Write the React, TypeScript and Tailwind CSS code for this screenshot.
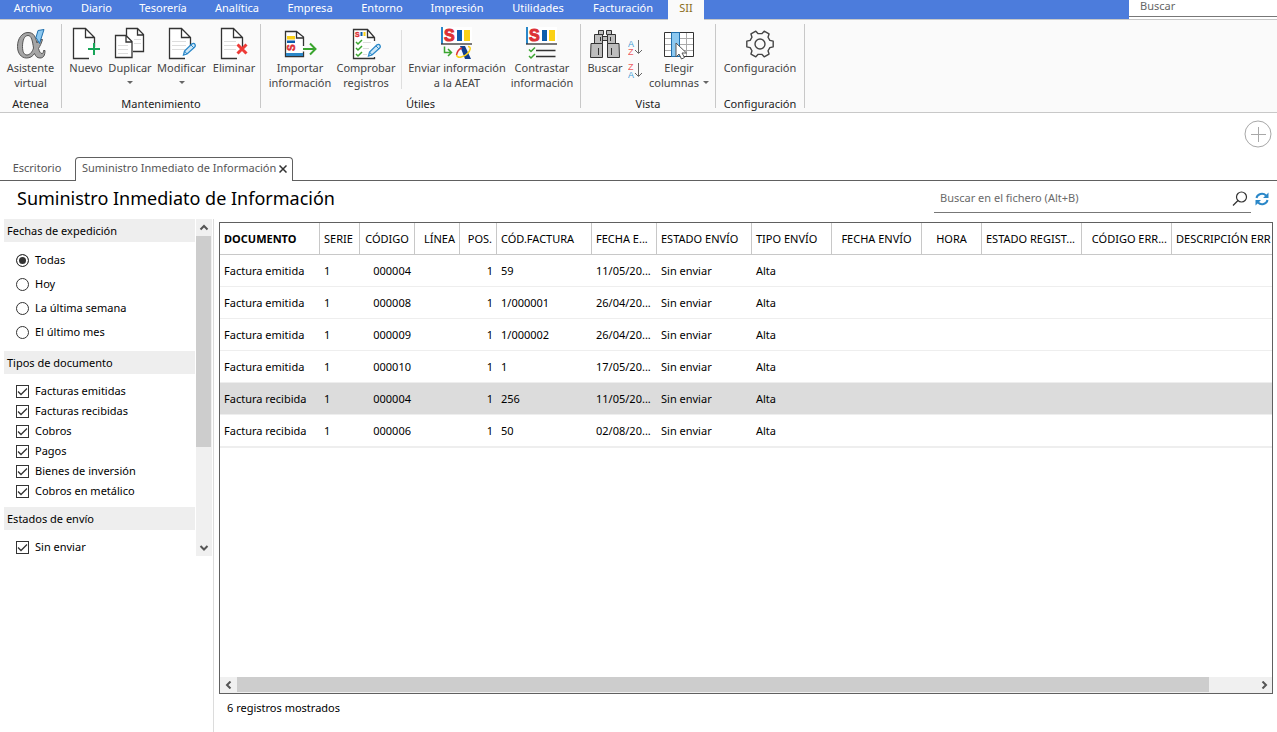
import type { ReactNode } from "react";

const MENU = [
  { label: "Archivo", width: "w-[66px]" },
  { label: "Diario", width: "w-[61px]" },
  { label: "Tesorería", width: "w-[72px]" },
  { label: "Analítica", width: "w-[76px]" },
  { label: "Empresa", width: "w-[70px]" },
  { label: "Entorno", width: "w-[74px]" },
  { label: "Impresión", width: "w-[76px]" },
  { label: "Utilidades", width: "w-[86px]" },
  { label: "Facturación", width: "w-[84px]" },
];

type Align = "left" | "center" | "right";

const COLUMNS: { label: string; width: string; head: Align; cell: Align }[] = [
  { label: "DOCUMENTO", width: "w-[100px]", head: "left", cell: "left" },
  { label: "SERIE", width: "w-[40px]", head: "left", cell: "left" },
  { label: "CÓDIGO", width: "w-[55px]", head: "center", cell: "right" },
  { label: "LÍNEA", width: "w-[45px]", head: "right", cell: "right" },
  { label: "POS.", width: "w-[37px]", head: "right", cell: "right" },
  { label: "CÓD.FACTURA", width: "w-[95px]", head: "left", cell: "left" },
  { label: "FECHA E...", width: "w-[65px]", head: "left", cell: "left" },
  { label: "ESTADO ENVÍO", width: "w-[95px]", head: "left", cell: "left" },
  { label: "TIPO ENVÍO", width: "w-[80px]", head: "left", cell: "left" },
  { label: "FECHA ENVÍO", width: "w-[90px]", head: "center", cell: "left" },
  { label: "HORA", width: "w-[60px]", head: "center", cell: "left" },
  { label: "ESTADO REGIST...", width: "w-[100px]", head: "left", cell: "left" },
  { label: "CÓDIGO ERR...", width: "w-[90px]", head: "right", cell: "right" },
  { label: "DESCRIPCIÓN ERR", width: "w-auto", head: "left", cell: "left" },
];

const ROWS = [
  ["Factura emitida", "1", "000004", "", "1", "59", "11/05/20...", "Sin enviar", "Alta"],
  ["Factura emitida", "1", "000008", "", "1", "1/000001", "26/04/20...", "Sin enviar", "Alta"],
  ["Factura emitida", "1", "000009", "", "1", "1/000002", "26/04/20...", "Sin enviar", "Alta"],
  ["Factura emitida", "1", "000010", "", "1", "1", "17/05/20...", "Sin enviar", "Alta"],
  ["Factura recibida", "1", "000004", "", "1", "256", "11/05/20...", "Sin enviar", "Alta"],
  ["Factura recibida", "1", "000006", "", "1", "50", "02/08/20...", "Sin enviar", "Alta"],
];
const SELECTED_ROW = 4;

const ALIGN = { left: "text-left", center: "text-center", right: "text-right" };

export default function App() {
  return (
    <div className="flex h-screen flex-col overflow-hidden bg-white font-['Noto_Sans',sans-serif] text-[11px] text-black">
      <MenuBar />
      <Ribbon />
      <TabStrip />
      <TitleRow />
      <div className="flex min-h-0 flex-1">
        <Sidebar />
        <main className="flex min-w-0 flex-1 flex-col pt-[3px] pr-1 pl-[5px]">
          <Records />
          <p className="h-[38px] px-2 pt-[6px] leading-4">6 registros mostrados</p>
        </main>
      </div>
    </div>
  );
}

function MenuBar() {
  return (
    <nav className="flex h-[19px] shrink-0 bg-[#4c7cdc]">
      {MENU.map((m) => (
        <button key={m.label} className={`h-[19px] shrink-0 pb-[3px] text-center leading-4 text-white ${m.width}`}>
          {m.label}
        </button>
      ))}
      <button className="z-10 ml-[3px] h-5 w-9 bg-[#fafafa] pb-1 leading-4 text-[#8a6d1b]">SII</button>
      <div className="ml-auto w-[148px] bg-white">
        <input
          aria-label="Buscar"
          placeholder="Buscar"
          className="block h-[17px] w-full border-b border-[#777] px-[11px] pb-[6px] outline-none placeholder:text-[#666]"
        />
      </div>
    </nav>
  );
}

function Ribbon() {
  return (
    <div className="flex h-[94px] shrink-0 border-t border-b border-[#c8c8c8] bg-[#fafafa] pt-1 pb-1">
      <Group name="Atenea" width="w-[62px]">
        <Tool icon={<AlphaIcon />} lines={["Asistente", "virtual"]} width="w-[60px]" />
      </Group>
      <Group name="Mantenimiento" width="w-[199px]">
        <Tool icon={<NewIcon />} lines={["Nuevo"]} width="w-[43px]" />
        <Tool icon={<DuplicateIcon />} lines={["Duplicar"]} width="w-[45px]" menu />
        <Tool icon={<EditIcon />} lines={["Modificar"]} width="w-[58px]" menu />
        <Tool icon={<DeleteIcon />} lines={["Eliminar"]} width="w-[47px]" />
      </Group>
      <Group name="Útiles" width="w-[320px]">
        <Tool icon={<ImportIcon />} lines={["Importar", "información"]} width="w-[66px]" />
        <Tool icon={<CheckRecordsIcon />} lines={["Comprobar", "registros"]} width="w-[66px]" />
        <span className="mx-[2px] mt-[6px] h-[59px] w-px bg-[#dedede]" />
        <Tool icon={<SendIcon />} lines={["Enviar información", "a la AEAT"]} width="w-[106px]" />
        <Tool icon={<ContrastIcon />} lines={["Contrastar", "información"]} width="w-[64px]" />
      </Group>
      <Group name="Vista" width="w-[135px]">
        <Tool icon={<BinocularsIcon />} lines={["Buscar"]} width="w-[38px]" />
        <div className="mx-1 flex w-4 flex-col gap-[5px] pt-[14px]">
          <button aria-label="Orden ascendente">
            <SortIcon first="A" second="Z" />
          </button>
          <button aria-label="Orden descendente">
            <SortIcon first="Z" second="A" />
          </button>
        </div>
        <Tool icon={<ColumnsIcon />} lines={["Elegir", "columnas"]} width="w-[62px]" menu />
      </Group>
      <Group name="Configuración" width="w-[89px]">
        <Tool icon={<GearIcon />} lines={["Configuración"]} width="w-[80px]" />
      </Group>
    </div>
  );
}

function Group({ name, width, children }: { name: string; width: string; children: ReactNode }) {
  return (
    <section className={`flex shrink-0 flex-col border-r border-[#c8c8c8] ${width}`}>
      <div className="flex flex-1 justify-center">{children}</div>
      <h2 className="text-center leading-2 text-[#222]">{name}</h2>
    </section>
  );
}

function Tool({ icon, lines, width, menu }: { icon: ReactNode; lines: string[]; width: string; menu?: boolean }) {
  const arrow = (
    <svg width="6" height="3" className="inline-block">
      <path d="M0 0h6L3 3z" fill="#666" />
    </svg>
  );
  return (
    <button className={`flex shrink-0 flex-col items-center pt-[2px] whitespace-nowrap text-[#444] ${width}`}>
      {icon}
      <span className="leading-[15px]">{lines[0]}</span>
      {lines[1] ? (
        <span className="flex items-center gap-1 leading-[15px]">
          {lines[1]}
          {menu && arrow}
        </span>
      ) : (
        menu && <span className="flex h-[15px] items-center">{arrow}</span>
      )}
    </button>
  );
}

function TabStrip() {
  return (
    <div className="flex h-[68px] shrink-0 flex-col">
      <div className="flex flex-1 justify-end pt-[7px] pr-[5px]">
        <button aria-label="Nueva pestaña" className="h-7">
          <svg width="28" height="28" fill="none" stroke="#a8a8a8">
            <circle cx="14" cy="14" r="13" />
            <path d="M14.500 7v15M7 14.500h15" />
          </svg>
        </button>
      </div>
      <div className="flex text-[#555]">
        <button className="w-[75px] border-b border-[#606060] pr-px">Escritorio</button>
        <div className="flex h-6 w-[218px] items-center justify-between rounded-t-[4px] border border-b-0 border-[#606060] pr-[5px] pb-[2px] pl-[6px] whitespace-nowrap">
          <button>Suministro Inmediato de Información</button>
          <button aria-label="Cerrar">
            <svg width="8" height="8" stroke="#333" strokeWidth="1.500">
              <path d="M0.500 0.500l7 7M7.500 0.500l-7 7" />
            </svg>
          </button>
        </div>
        <span className="flex-1 border-b border-[#606060]" />
      </div>
    </div>
  );
}

function TitleRow() {
  return (
    <header className="flex h-[38px] shrink-0 justify-between pr-2 pl-[17px]">
      <h1 className="pt-[3px] text-[18px] leading-7">Suministro Inmediato de Información</h1>
      <div className="flex h-8 items-center gap-[4px]">
        <div className="flex h-8 w-[317px] items-center border-b border-[#777] pt-1 pr-[3px] pl-[6px]">
          <input
            aria-label="Buscar en el fichero"
            placeholder="Buscar en el fichero (Alt+B)"
            className="min-w-0 flex-1 outline-none placeholder:text-[#6a6a6a]"
          />
          <svg width="16" height="17" fill="none" stroke="#333" strokeWidth="1.200">
            <circle cx="9.500" cy="7" r="5" />
            <path d="M6 10.500L1 15.500" />
          </svg>
        </div>
        <button aria-label="Actualizar" className="pt-1">
          <svg width="14" height="14" fill="none" stroke="#2a87c8" strokeWidth="2">
            <path d="M1.500 6A5.500 5 0 0 1 11 3.500M12.500 8A5.500 5 0 0 1 3 10.500" />
            <path d="M13.500 0.500V6H8zM0.500 13.500V8H6z" fill="#2a87c8" stroke="none" />
          </svg>
        </button>
      </div>
    </header>
  );
}

function Sidebar() {
  return (
    <aside className="flex w-[214px] shrink-0 border-r border-[#dcdcdc] pl-1">
      <div className="w-[191px]">
        <PanelTitle>Fechas de expedición</PanelTitle>
        <div className="pt-[6px] pb-[7px]">
          {["Todas", "Hoy", "La última semana", "El último mes"].map((label, i) => (
            <label key={label} className="flex h-6 items-center gap-[6px] pl-3">
              <input
                type="radio"
                name="fecha"
                defaultChecked={i === 0}
                className="size-[13px] appearance-none rounded-full border border-[#333] bg-white checked:bg-[#333] checked:shadow-[inset_0_0_0_2px_white]"
              />
              {label}
            </label>
          ))}
        </div>
        <PanelTitle>Tipos de documento</PanelTitle>
        <div className="pt-[7px] pb-[6px]">
          <Check label="Facturas emitidas" />
          <Check label="Facturas recibidas" />
          <Check label="Cobros" />
          <Check label="Pagos" />
          <Check label="Bienes de inversión" />
          <Check label="Cobros en metálico" />
        </div>
        <PanelTitle>Estados de envío</PanelTitle>
        <div className="pt-[7px]">
          <Check label="Sin enviar" />
        </div>
      </div>
      <div className="ml-px flex h-[337px] w-4 flex-col bg-[#f0f0f0]">
        <ScrollArrow d="M1.500 5.500L5 2l3.500 3.500" className="h-[17px]" />
        <div className="h-[211px] w-[15px] bg-[#cdcdcd]" />
        <ScrollArrow d="M1.500 2L5 5.500 8.500 2" className="mt-auto h-[17px]" />
      </div>
    </aside>
  );
}

function PanelTitle({ children }: { children: ReactNode }) {
  return <h3 className="h-[23px] bg-[#eee] px-[3px] leading-[23px]">{children}</h3>;
}

function Check({ label }: { label: string }) {
  return (
    <label className="flex h-5 items-center gap-[6px] pl-3">
      <span className="grid">
        <input
          type="checkbox"
          defaultChecked
          className="peer col-start-1 row-start-1 size-[13px] appearance-none border border-[#333] bg-white"
        />
        <svg
          width="13"
          height="13"
          fill="none"
          stroke="#333"
          strokeWidth="1.300"
          className="pointer-events-none invisible col-start-1 row-start-1 peer-checked:visible"
        >
          <path d="M2 6.500L5 9.500L11 3.500" />
        </svg>
      </span>
      {label}
    </label>
  );
}

function ScrollArrow({ d, className }: { d: string; className: string }) {
  return (
    <button aria-label="Desplazar" className={`flex items-center justify-center ${className}`}>
      <svg width="10" height="8" fill="none" stroke="#555" strokeWidth="2">
        <path d={d} />
      </svg>
    </button>
  );
}

function Records() {
  return (
    <div className="flex min-h-0 flex-1 flex-col border border-[#606060]">
      <div className="flex-1 overflow-hidden">
        <table className="w-full table-fixed border-separate border-spacing-0 whitespace-nowrap">
          <thead>
            <tr className="h-8">
              {COLUMNS.map((c, i) => (
                <th
                  key={c.label}
                  className={`overflow-hidden border-b border-[#c8c8c8] px-1 pt-[2px] pb-px last:pr-0 not-last:border-r ${c.width} ${ALIGN[c.head]} ${i === 0 ? "font-bold" : "font-normal"}`}
                >
                  {c.label}
                </th>
              ))}
            </tr>
          </thead>
          <tbody>
            {ROWS.map((row, r) => (
              <tr key={r} className={r === SELECTED_ROW ? "h-8 bg-[#dcdcdc]" : "h-8 last:h-[33px] last:[&>td]:border-b-2"}>
                {COLUMNS.map((c, i) => (
                  <td key={c.label} className={`border-b border-[#eee] px-1 pt-[2px] pb-px ${ALIGN[c.cell]}`}>
                    {row[i]}
                  </td>
                ))}
              </tr>
            ))}
          </tbody>
        </table>
      </div>
      <div className="flex h-4 shrink-0 bg-[#f0f0f0]">
        <ScrollArrow d="M6.500 0.500L3 4l3.500 3.500" className="w-[17px]" />
        <div className="h-[15px] flex-1 bg-[#cdcdcd]" />
        <ScrollArrow d="M3.500 0.500L7 4 3.500 7.500" className="ml-[46px] w-[17px]" />
      </div>
    </div>
  );
}

function Icon({ children }: { children: ReactNode }) {
  return (
    <svg width="34" height="34" viewBox="0 0 34 34" fill="none" className="shrink-0">
      {children}
    </svg>
  );
}

function TextLines({ x, y, width }: { x: number; y: number; width: number }) {
  return <path d={`M${x} ${y}h${width}m-${width} 4h${width}m-${width} 4h${width}`} stroke="#ddd" />;
}

function Pencil({ x, y }: { x: number; y: number }) {
  return (
    <g transform={`translate(${x} ${y})`}>
      <path d="M0.500 12l1-4L9 0.800q2-1 3 0.500t-0.500 3L4 11z" fill="#cfe8f8" stroke="#2a87c8" strokeWidth="1.300" />
      <path d="M1.500 8L4 11M8 2l3 3" stroke="#2a87c8" />
    </g>
  );
}

function AlphaIcon() {
  const bowl = "M14 6.500C20 6.500 21.500 11 23 17L25 13.500H28.500C27.500 17 26 20 24.500 22.500C25.500 26 26.500 27.500 28 27.500C29 27.500 29.500 26.500 29.500 24.500H31C31 29.500 29.500 32 26 32C23 32 21.500 30 20.500 27.500C18.500 30.500 16 32 12.500 32C7 32 3.500 27 3.500 20.500C3.500 12.500 8 6.500 14 6.500z";
  return (
    <Icon>
      <path
        d={`${bowl}M14 9.500C10.500 9.500 8.500 14 8.500 20.500C8.500 26 10 29 13 29C16 29 18.500 25.500 19.500 22C18.500 15 17.500 9.500 14 9.500z`}
        fill="#a5a5a5"
        fillRule="evenodd"
        stroke="#555"
      />
      <path d="M24 4.500l6-1-4.500 14-3.500-6z" fill="#8cc8f0" stroke="#1f6fae" />
    </Icon>
  );
}

function Page() {
  return (
    <>
      <path d="M25.500 21V12L16.500 2.500H4.500V32.500H21M16.500 3v8.500H25" fill="#fff" />
      <path d="M25.500 21V11.500L16.500 2.500H4.500V32.500H20M16.500 3v8.500H25" stroke="#333" strokeWidth="1.300" />
    </>
  );
}

function NewIcon() {
  return (
    <Icon>
      <Page />
      <path d="M25 17v12M19 23h12" stroke="#18a558" strokeWidth="2" />
    </Icon>
  );
}

function DuplicateIcon() {
  return (
    <Icon>
      <path d="M13.500 10V2.500h11l6 6V25.500H20M24.500 3v6H30" fill="#fff" stroke="#333" strokeWidth="1.300" />
      <path d="M2.500 9.500h10.500l6 6V31.500H2.500zM13 10v6h6" fill="#fff" stroke="#333" strokeWidth="1.300" />
      <TextLines x={5} y={19.500} width={10} />
      <path d="M21 13.500h7m-7 4h7" stroke="#ddd" />
    </Icon>
  );
}

function EditIcon() {
  return (
    <Icon>
      <Page />
      <TextLines x={7} y={15.500} width={14} />
      <Pencil x={18} y={17} />
    </Icon>
  );
}

function DeleteIcon() {
  return (
    <Icon>
      <Page />
      <TextLines x={7} y={15.500} width={12} />
      <path d="M20.500 18.500l9 9M29.500 18.500l-9 9" stroke="#ee3b37" strokeWidth="3" />
    </Icon>
  );
}

function ImportIcon() {
  return (
    <Icon>
      <path d="M20.500 20V11L13.500 5.500H2.500v25h18v-5M13.500 6v6h7" fill="#fff" stroke="#333" strokeWidth="1.300" />
      <path d="M3 27h17v3H3z" fill="#2a87c8" />
      <path d="M4 10h8v3.500H4z" fill="#fbd116" />
      <path d="M4 14.500h8v2.500H4z" fill="#0b5cad" />
      <text transform="translate(12 25) rotate(-90)" fontSize="10" fontWeight="bold" fill="#dc3035" stroke="#dc3035" strokeWidth="0.500" className="font-['Liberation_Sans',sans-serif]">
        S
      </text>
      <path d="M20 23h12M27 17.500l5.500 5.500L27 28.500" stroke="#3aa52f" strokeWidth="2" />
    </Icon>
  );
}

function CheckRecordsIcon() {
  return (
    <Icon>
      <path d="M25.500 15V11.500L18.500 3.500H4.500V32.500H25.500V31M18.500 4v7.500h7" fill="#fff" stroke="#333" strokeWidth="1.300" />
      <text x="6" y="10.500" fontSize="7" fontWeight="bold" fill="#dc3035" stroke="#dc3035" strokeWidth="0.400" className="font-['Liberation_Sans',sans-serif]">
        S
      </text>
      <path d="M11.500 6h2v4h-2z" fill="#0b5cad" />
      <path d="M14.500 6h2v4h-2z" fill="#fbd116" />
      <path d="M7 16l2 2 4-4M7 22l2 2 4-4M7 28l2 2 4-4" stroke="#3aa52f" strokeWidth="1.500" />
      <path d="M14 16.500h8m-8 6h6m-6 6h4" stroke="#ddd" />
      <Pencil x={19} y={18} />
    </Icon>
  );
}

function SiiMark() {
  return (
    <>
      <path d="M1 1h31v16H1z" fill="#fff" />
      <path d="M1 1h2v17H1z" fill="#2a87c8" />
      <path d="M1 18h31" stroke="#333" strokeWidth="1.300" />
      <text x="4" y="15" fontSize="16" fontWeight="bold" fill="#dc3035" stroke="#dc3035" className="font-['Liberation_Sans',sans-serif]">
        S
      </text>
      <path d="M17 4h5v11h-5z" fill="#0b5cad" />
      <path d="M24 4h6v11h-6z" fill="#fbd116" />
    </>
  );
}

function SendIcon() {
  return (
    <Icon>
      <SiiMark />
      <path d="M4.500 20.500v6H11M8 23l3.500 3.500L8 30" stroke="#3aa52f" strokeWidth="1.500" />
      <path d="M20 20h5l6 13h-6z" fill="#123f8c" />
      <path d="M22 22c-3 1-5 4-5.500 7" stroke="#dc3035" strokeWidth="1.500" />
      <path d="M16.500 29c1 4 8 2 11-1.500c3-3 4-7 0.500-7" stroke="#fbd116" strokeWidth="1.500" />
    </Icon>
  );
}

function ContrastIcon() {
  return (
    <Icon>
      <SiiMark />
      <path d="M4 23.500l2 2 4-4M4 30l2 2 4-4" stroke="#3aa52f" strokeWidth="1.500" />
      <path d="M11 24.500h19.500M11 30.500h19.500" stroke="#333" strokeWidth="1.300" />
    </Icon>
  );
}

function BinocularsIcon() {
  return (
    <Icon>
      <g fill="#bdbdbd" stroke="#333">
        <path d="M10.500 4.500h5v4h-5zM18.500 4.500h5v4h-5z" />
        <path d="M6.500 8.500h8v9h-8zM19.500 8.500h8v9h-8zM14.500 10.500h5v4h-5z" />
        <path d="M3 17.500h11.500v14H2.500zM19.500 17.500h11.500l0.500 14H19.500z" />
        <path d="M12.500 11v4M22.500 11v4M10.500 22v7M23.500 22v7" />
      </g>
    </Icon>
  );
}

function SortIcon({ first, second }: { first: string; second: string }) {
  const color = (c: string) => (c === "A" ? "#3f9bd6" : "#ee5a5f");
  return (
    <svg width="16" height="18" fontSize="9" className="font-['Liberation_Sans',sans-serif]">
      <text x="0" y="9" fill={color(first)}>{first}</text>
      <text x="0" y="17" fill={color(second)}>{second}</text>
      <path d="M10.500 2v13M7 12l3.500 3.500L14 12" fill="none" stroke="#666" />
    </svg>
  );
}

function ColumnsIcon() {
  return (
    <Icon>
      <path d="M2.500 6.500h29v24h-29z" fill="#fff" stroke="#333" />
      <path d="M3 12.500h28M3 18.500h28M3 24.500h28M24.500 7v23" stroke="#aaa" />
      <path d="M9.500 6.500h8v24h-8z" fill="#8cc8f0" stroke="#1f6fae" />
      <path d="M14 17v14l3-3 2.500 5 3-1.500-2.500-4.500h4.500z" fill="#fff" stroke="#555" />
    </Icon>
  );
}

function GearIcon() {
  // six teeth, each built from four corners
  const points = Array.from({ length: 6 }, (_, i) =>
    [
      [-20, 10.500],
      [-12, 13.500],
      [12, 13.500],
      [20, 10.500],
    ].map(([offset, radius]) => {
      const angle = ((i * 60 + offset) * Math.PI) / 180;
      return `${(17 + radius * Math.cos(angle)).toFixed(2)},${(18 + radius * Math.sin(angle)).toFixed(2)}`;
    }),
  );
  return (
    <Icon>
      <g stroke="#444" strokeWidth="1.400" strokeLinejoin="round">
        <polygon points={points.flat().join(" ")} />
        <circle cx="17" cy="18" r="5" />
      </g>
    </Icon>
  );
}
